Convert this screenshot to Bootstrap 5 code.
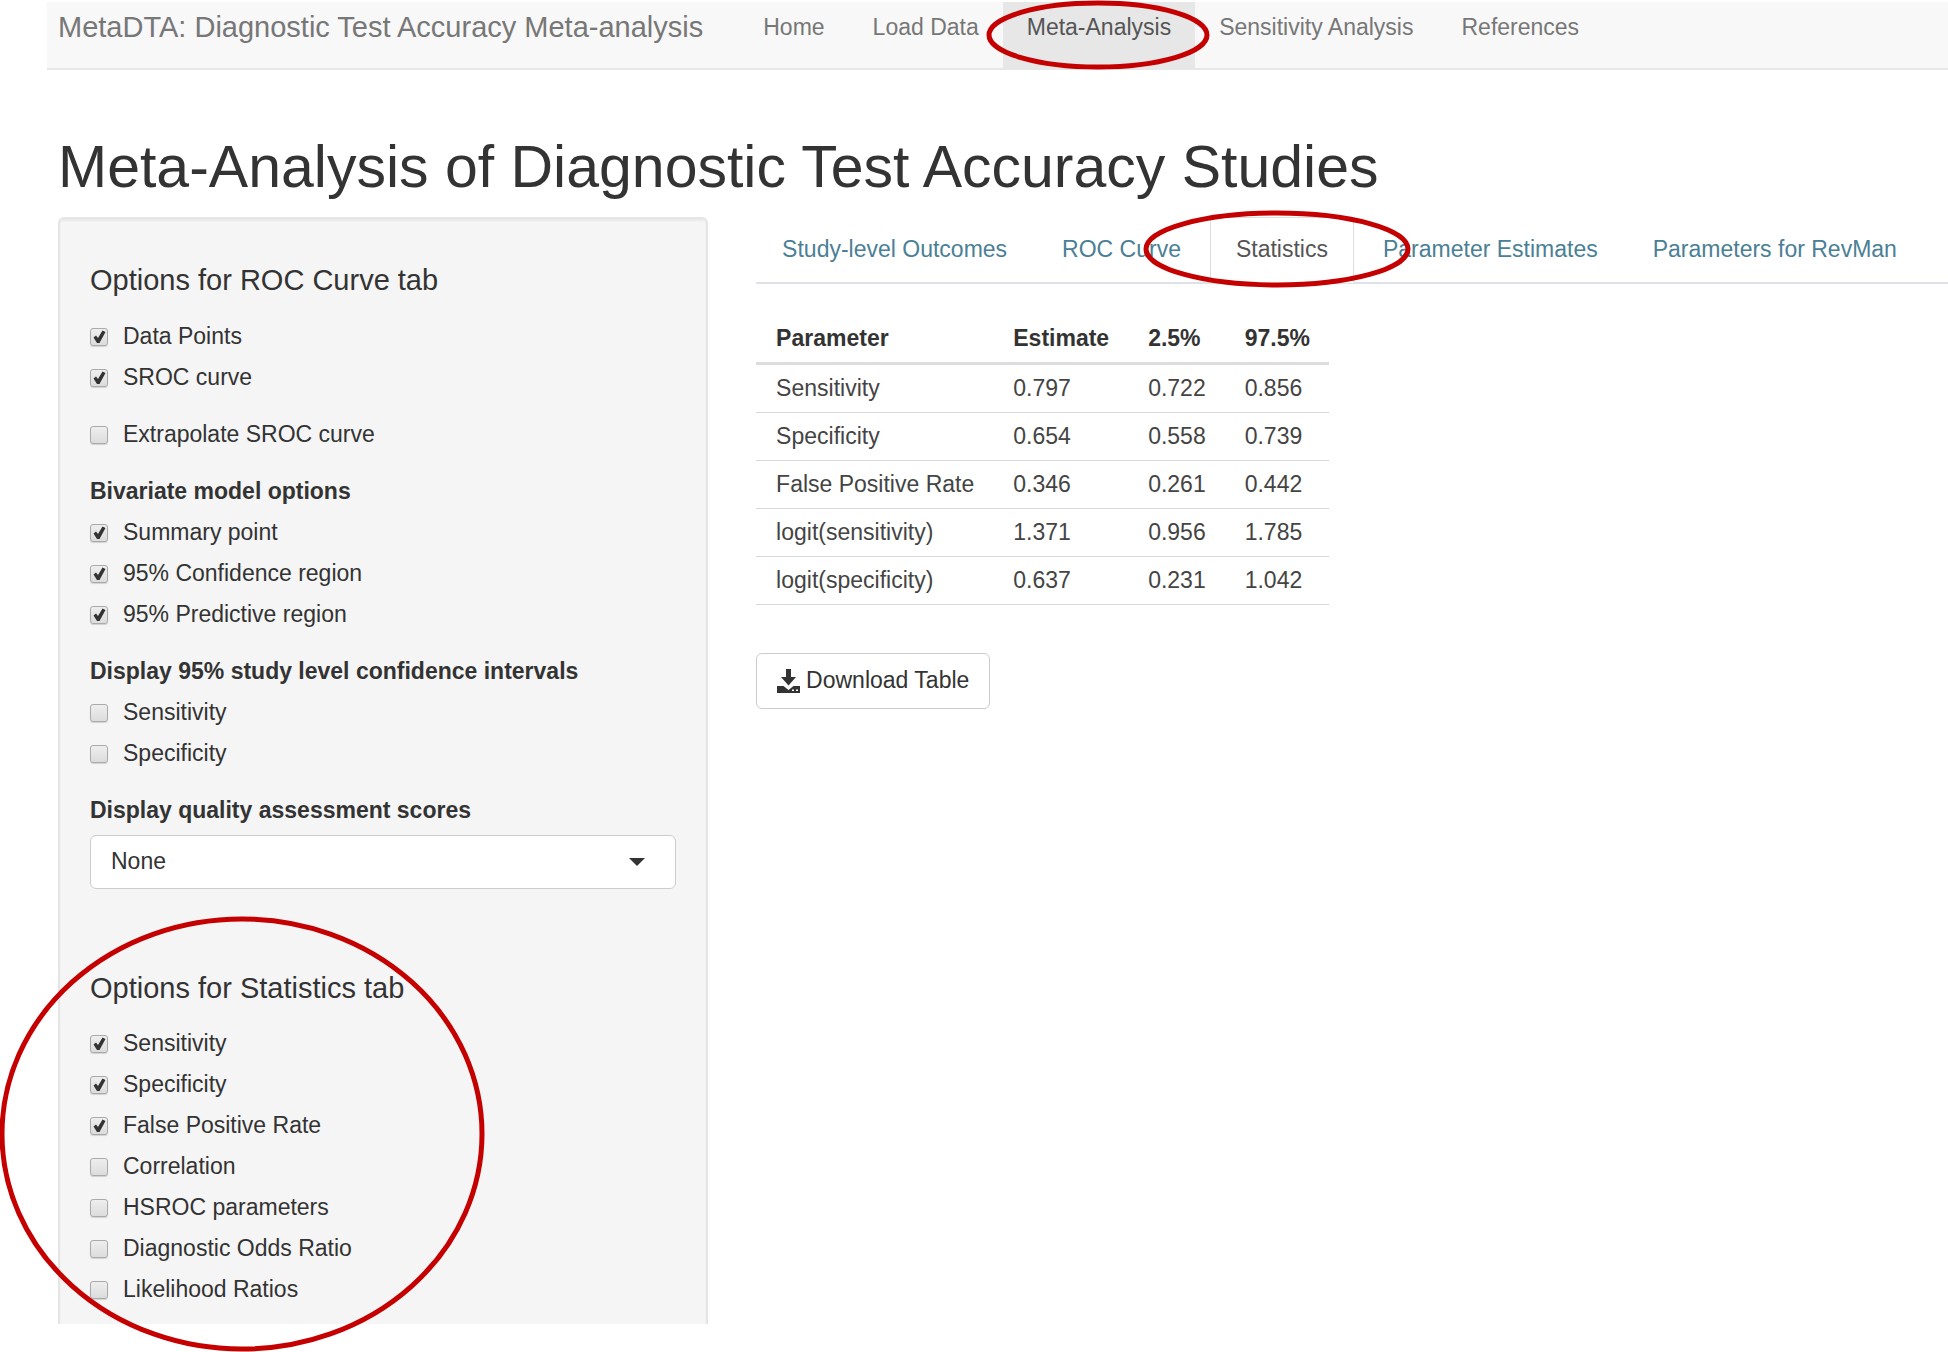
<!DOCTYPE html>
<html lang="en">
<head>
<meta charset="utf-8">
<meta name="viewport" content="width=device-width, initial-scale=1">
<title>MetaDTA: Diagnostic Test Accuracy Meta-analysis</title>
<link href="https://cdn.jsdelivr.net/npm/bootstrap@5.3.0/dist/css/bootstrap.min.css" rel="stylesheet">
<style>
body { font-family: "Liberation Sans", Arial, sans-serif; font-size: 23px; line-height: 33px; color: #333; background: #fff; }
.page-shell { padding: 0 0 29px 47px; }
.top-bar { background: #f8f8f8; border-bottom: 2px solid #e7e7e7; margin-top: 2px; padding: 0 0 0 11px; align-items: stretch; }
.top-bar .navbar-brand { font-size: 29px; line-height: 33px; color: #777; padding: 9px 0 24px; margin-right: 36px; }
.top-bar .navbar-nav .nav-link { color: #777; padding: 9px 24px 24px; }
.top-bar .navbar-nav .nav-link.active { color: #555; background: #e7e7e7; }
.page-body { padding-left: 11px; }
.page-title { font-size: 59px; line-height: 65px; font-weight: 400; margin: 65px 0 17px; }
.split { display: grid; grid-template-columns: minmax(0, 6fr) minmax(0, 11fr); column-gap: 48px; }
.side-panel { background: #f5f5f5; border: 2px solid #e5e5e5; border-bottom: 0; border-radius: 6px 6px 0 0; box-shadow: inset 0 2px 2px rgba(0,0,0,.05); padding: 45px 30px 18px; }
.side-panel h2 { font-size: 29px; line-height: 32px; font-weight: 400; margin: 0 0 24px; }
.option-set { margin: 0 0 24px; padding: 0; border: 0; display: flex; flex-direction: column; gap: 8px; }
.option-set > legend, .option-title { float: none; font-size: 23px; line-height: 33px; font-weight: 700; margin: 0 0 8px; padding: 0; }
.stats-options { margin-top: 83px; position: relative; }
.stats-options h2 { margin-bottom: 23px; }
.stats-options .option-set { margin-bottom: 0; }
.form-check { display: flex; padding: 0; margin: 0; min-height: 33px; }
.form-check .form-check-input { float: none; flex: none; width: 18px; height: 18px; margin: 8px 15px 0 0; border: 1px solid #aaa; border-radius: 3px; background: linear-gradient(#eee, #dcdcdc); box-shadow: 0 1px 1px rgba(0,0,0,.15); }
.form-check .form-check-input:checked { background: url("data:image/svg+xml,%3csvg xmlns='http://www.w3.org/2000/svg' viewBox='0 0 16 16'%3e%3cpath d='M2.500 8.500L5 6.500 7 9 11.500 1.500 14.500 3 8.500 14H6z' fill='%23333'/%3e%3c/svg%3e") center / 16px 16px no-repeat, linear-gradient(#eee, #dcdcdc); border-color: #aaa; }
.quality-select { height: 54px; font-size: 23px; line-height: 33px; color: #333; padding: 8px 48px 10px 20px; border: 1px solid #ccc; border-radius: 6px; background: #fff url("data:image/svg+xml,%3csvg xmlns='http://www.w3.org/2000/svg' viewBox='0 0 16 8'%3e%3cpath d='M0 0h16L8 8z' fill='%23333'/%3e%3c/svg%3e") right 30px center / 16px 8px no-repeat; }
.result-tabs { --bs-nav-tabs-border-color: #ddd; border-bottom: 2px solid #dfe1e8; gap: 3px; margin-bottom: 31px; }
.result-tabs .nav-link { color: #4a8095; padding: 15px 25px 16px; border-radius: 6px 6px 0 0; margin-bottom: -1px; }
.result-tabs .nav-link.active { color: #555; border-color: #ddd #ddd transparent; }
.result-table { width: auto; margin: 0 0 48px; color: #333; }
.result-table > thead > tr > th { padding: 7px 19px 7px 20px; border-bottom: 3px solid #ddd; }
.result-table > tbody > tr > td { padding: 7px 19px 7px 20px; border-bottom: 1px solid #d8d8d8; color: #444; }
.download-btn { font-size: 23px; line-height: 33px; color: #333; background: #fff; border: 1px solid #ccc; border-radius: 6px; padding: 10px 20px 11px; display: inline-flex; align-items: center; gap: 6px; }
/* red rings drawn round the highlighted controls */
.ring { position: absolute; pointer-events: none; z-index: 5; overflow: visible; }
.ring ellipse { fill: none; stroke: #c40000; stroke-width: 5px; }
.ring-nav { left: -17px; top: -2px; width: 224px; height: 70px; }
.ring-tab { left: -67px; top: -7px; width: 268px; height: 78px; }
.ring-stats { left: -90px; top: -56px; width: 485px; height: 436px; }
</style>
<script src="https://cdn.jsdelivr.net/npm/bootstrap@5.3.0/dist/js/bootstrap.bundle.min.js"></script>
</head>
<body>
<div class="page-shell">
  <nav class="navbar navbar-expand top-bar">
    <a class="navbar-brand" href="#">MetaDTA: Diagnostic Test Accuracy Meta-analysis</a>
    <ul class="navbar-nav">
      <li class="nav-item"><a class="nav-link" href="#">Home</a></li>
      <li class="nav-item"><a class="nav-link" href="#">Load Data</a></li>
      <li class="nav-item position-relative">
        <a class="nav-link active" aria-current="page" href="#">Meta-Analysis</a>
        <svg class="ring ring-nav" viewBox="0 0 224 70" aria-hidden="true"><ellipse cx="112" cy="35" rx="109" ry="32"/></svg>
      </li>
      <li class="nav-item"><a class="nav-link" href="#">Sensitivity Analysis</a></li>
      <li class="nav-item"><a class="nav-link" href="#">References</a></li>
    </ul>
  </nav>

  <div class="page-body">
    <h1 class="page-title">Meta-Analysis of Diagnostic Test Accuracy Studies</h1>
    <div class="split">
      <form class="side-panel">
        <section>
          <h2>Options for ROC Curve tab</h2>
          <div class="option-set">
            <div class="form-check"><input class="form-check-input" type="checkbox" id="points" checked><label class="form-check-label" for="points">Data Points</label></div>
            <div class="form-check"><input class="form-check-input" type="checkbox" id="sroc" checked><label class="form-check-label" for="sroc">SROC curve</label></div>
          </div>
          <div class="option-set">
            <div class="form-check"><input class="form-check-input" type="checkbox" id="extrapolate"><label class="form-check-label" for="extrapolate">Extrapolate SROC curve</label></div>
          </div>
          <fieldset class="option-set">
            <legend>Bivariate model options</legend>
            <div class="form-check"><input class="form-check-input" type="checkbox" id="summary" checked><label class="form-check-label" for="summary">Summary point</label></div>
            <div class="form-check"><input class="form-check-input" type="checkbox" id="confidence" checked><label class="form-check-label" for="confidence">95% Confidence region</label></div>
            <div class="form-check"><input class="form-check-input" type="checkbox" id="predictive" checked><label class="form-check-label" for="predictive">95% Predictive region</label></div>
          </fieldset>
          <fieldset class="option-set">
            <legend>Display 95% study level confidence intervals</legend>
            <div class="form-check"><input class="form-check-input" type="checkbox" id="ci-sens"><label class="form-check-label" for="ci-sens">Sensitivity</label></div>
            <div class="form-check"><input class="form-check-input" type="checkbox" id="ci-spec"><label class="form-check-label" for="ci-spec">Specificity</label></div>
          </fieldset>
          <label class="option-title d-block" for="quality">Display quality assessment scores</label>
          <select class="form-select quality-select" id="quality"><option>None</option></select>
        </section>
        <section class="stats-options">
          <h2>Options for Statistics tab</h2>
          <div class="option-set">
            <div class="form-check"><input class="form-check-input" type="checkbox" id="st-sens" checked><label class="form-check-label" for="st-sens">Sensitivity</label></div>
            <div class="form-check"><input class="form-check-input" type="checkbox" id="st-spec" checked><label class="form-check-label" for="st-spec">Specificity</label></div>
            <div class="form-check"><input class="form-check-input" type="checkbox" id="st-fpr" checked><label class="form-check-label" for="st-fpr">False Positive Rate</label></div>
            <div class="form-check"><input class="form-check-input" type="checkbox" id="st-corr"><label class="form-check-label" for="st-corr">Correlation</label></div>
            <div class="form-check"><input class="form-check-input" type="checkbox" id="st-hsroc"><label class="form-check-label" for="st-hsroc">HSROC parameters</label></div>
            <div class="form-check"><input class="form-check-input" type="checkbox" id="st-dor"><label class="form-check-label" for="st-dor">Diagnostic Odds Ratio</label></div>
            <div class="form-check"><input class="form-check-input" type="checkbox" id="st-lr"><label class="form-check-label" for="st-lr">Likelihood Ratios</label></div>
          </div>
          <svg class="ring ring-stats" viewBox="0 0 485 436" aria-hidden="true"><ellipse cx="242" cy="218" rx="240" ry="215"/></svg>
        </section>
      </form>

      <main>
        <ul class="nav nav-tabs result-tabs">
          <li class="nav-item"><a class="nav-link" href="#">Study-level Outcomes</a></li>
          <li class="nav-item"><a class="nav-link" href="#">ROC Curve</a></li>
          <li class="nav-item position-relative">
            <a class="nav-link active" aria-current="page" href="#">Statistics</a>
            <svg class="ring ring-tab" viewBox="0 0 268 78" aria-hidden="true"><ellipse cx="134" cy="39" rx="131" ry="36"/></svg>
          </li>
          <li class="nav-item"><a class="nav-link" href="#">Parameter Estimates</a></li>
          <li class="nav-item"><a class="nav-link" href="#">Parameters for RevMan</a></li>
        </ul>
        <table class="table result-table">
          <thead><tr><th scope="col">Parameter</th><th scope="col">Estimate</th><th scope="col">2.5%</th><th scope="col">97.5%</th></tr></thead>
          <tbody>
            <tr><td>Sensitivity</td><td>0.797</td><td>0.722</td><td>0.856</td></tr>
            <tr><td>Specificity</td><td>0.654</td><td>0.558</td><td>0.739</td></tr>
            <tr><td>False Positive Rate</td><td>0.346</td><td>0.261</td><td>0.442</td></tr>
            <tr><td>logit(sensitivity)</td><td>1.371</td><td>0.956</td><td>1.785</td></tr>
            <tr><td>logit(specificity)</td><td>0.637</td><td>0.231</td><td>1.042</td></tr>
          </tbody>
        </table>
        <button type="button" class="btn download-btn">
          <svg width="23" height="24" viewBox="0 0 23 24" fill="#333" aria-hidden="true"><path d="M9 0h5v8h5l-7.500 8.500L4 8h5z"/><path fill-rule="evenodd" d="M0 17h6.500l5 4 5-4H23v7H0zM15 20.500V22h2v-1.500zm4 0V22h2v-1.500z"/></svg>
          <span>Download Table</span>
        </button>
      </main>
    </div>
  </div>
</div>
</body>
</html>
